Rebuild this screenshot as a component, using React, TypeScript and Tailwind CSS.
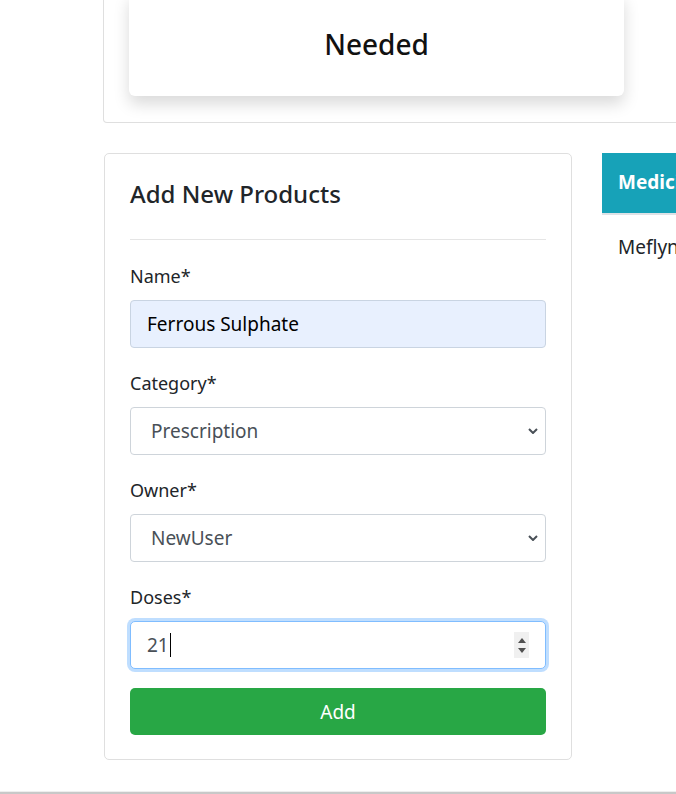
import React from 'react';

const font = { fontFamily: '"Noto Sans", "Open Sans", sans-serif' };

function Chevron() {
  return (
    <svg width="10" height="6" viewBox="0 0 10 6" className="pointer-events-none absolute right-[8px] top-1/2 -translate-y-1/2">
      <path d="M1 1l4 4 4-4" fill="none" stroke="#495057" strokeWidth="2" />
    </svg>
  );
}

function Field({ label, children, last }: { label: string; children: React.ReactNode; last?: boolean }) {
  return (
    <div className={last ? 'mb-[19px]' : 'mb-[21px]'}>
      <label className="mb-[10px] block text-[18px] leading-[28px] text-[#212529]">{label}</label>
      {children}
    </div>
  );
}

function SelectBox({ value }: { value: string }) {
  return (
    <div className="relative">
      <select
        defaultValue={value}
        className="h-[48px] w-full appearance-none rounded-[4px] border border-[#ced4da] bg-white pl-[20px] text-[19px] text-[#495057] outline-none"
      >
        <option>{value}</option>
      </select>
      <Chevron />
    </div>
  );
}

export default function App() {
  return (
    <div className="relative h-[794px] w-[676px] overflow-hidden bg-white text-[#212529]" style={font}>
      {/* top card */}
      <div className="ml-[103px] -mt-[34px] w-[700px] rounded-b-[4px] border border-t-0 border-[#dfdfdf] pb-[26px] pl-[25px] pt-[26px]">
        <div className="flex gap-[24px]">
          <div className="flex h-[104px] w-[495px] shrink-0 items-center justify-center rounded-[6px] bg-white shadow-[0_8px_16px_rgba(0,0,0,0.15)]">
            <span className="text-[28px] font-medium text-[#111]">Needed</span>
          </div>
        </div>
      </div>

      <div className="mt-[30px] flex gap-[30px] pl-[104px]">
        {/* form card */}
        <div className="w-[468px] shrink-0 rounded-[5px] border border-[#dfdfdf] px-[25px] py-[24px]">
          <h4 className="text-[24px] font-medium leading-[32px] text-[#212529]">Add New Products</h4>
          <hr className="mb-[22px] mt-[29px] border-t border-[#e5e5e5]" />

          <Field label="Name*">
            <input
              readOnly
              value="Ferrous Sulphate"
              className="h-[48px] w-full rounded-[4px] border border-[#c9d4e2] bg-[#e8f0fe] px-[16px] text-[19px] text-black outline-none"
            />
          </Field>
          <Field label="Category*">
            <SelectBox value="Prescription" />
          </Field>
          <Field label="Owner*">
            <SelectBox value="NewUser" />
          </Field>
          <Field label="Doses*" last>
            <div className="flex h-[48px] w-full items-center rounded-[5px] border border-[#80bdff] bg-white pl-[16px] pr-[16px] shadow-[0_0_0_3px_rgba(0,123,255,0.25)]">
              <span className="text-[19px] text-[#495057]">21</span>
              <span className="ml-[1px] h-[24px] w-px bg-black" />
              <div className="ml-auto flex h-[26px] w-[15px] flex-col items-center justify-center gap-[5px] bg-[#f0f0f0]">
                <svg width="8" height="5" viewBox="0 0 8 5"><path d="M4 0L8 5H0z" fill="#505050" /></svg>
                <svg width="8" height="5" viewBox="0 0 8 5"><path d="M0 0h8L4 5z" fill="#505050" /></svg>
              </div>
            </div>
          </Field>

          <button className="h-[47px] w-full rounded-[5px] bg-[#28a745] pt-[2px] text-[19px] text-white">Add</button>
        </div>

        {/* table */}
        <div className="w-[300px] shrink-0">
          <div className="flex h-[62px] items-center border-b-2 border-[#dee2e6] bg-[#17a2b8] pb-[2px] pl-[16px]">
            <span className="text-[19px] font-bold text-white">Medicine</span>
          </div>
          <div className="pl-[16px] pt-[18px] text-[19px] leading-[28px] text-[#212529]">Meflyn</div>
        </div>
      </div>

      <div className="absolute bottom-0 left-0 h-[3px] w-full border-t border-[#eeeeee] bg-[#c8c8c8]" />
    </div>
  );
}
